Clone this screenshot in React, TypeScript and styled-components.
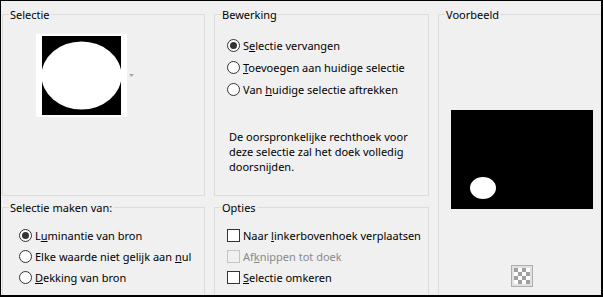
import React from 'react';
import styled, { createGlobalStyle } from 'styled-components';

const GlobalStyle = createGlobalStyle`
  body {
    margin: 0;
    background: #f0f0f0;
  }
`

const Dialog = styled.div`
  width: 603px;
  height: 297px;
  box-sizing: border-box;
  border: solid #000;
  border-width: 1px 2px 2px 1px;
  background: #f0f0f0;
  overflow: hidden;
  padding: 6px 0 0 1px;
  display: grid;
  grid-template-columns: 203px 215px 167px;
  grid-template-rows: 189px 100px;
  column-gap: 9px;
  row-gap: 4px;
  font-family: "Noto Sans", "Open Sans", sans-serif;
  font-size: 11px;
  color: #000;
`

const Group = styled.fieldset<{ $preview?: boolean }>`
  margin: 0;
  padding: 0;
  min-width: 0;
  border: 1px solid #dcdcdc;
  display: flex;
  flex-direction: column;
  ${p => p.$preview ? 'grid-column: 3; grid-row: 1 / 3;' : ''}
`

const Legend = styled.legend`
  margin-left: 6px;
  padding: 0 1px;
  line-height: 15px;
`

const ThumbRow = styled.div`
  display: flex;
  align-items: center;
  gap: 2px;
  margin: 12px 0 0 33px;
`

const ThumbFrame = styled.div`
  width: 91px;
  height: 83px;
  background: #fff;
  display: flex;
  align-items: center;
  justify-content: center;
`

const OptionList = styled.div<{ $top: number; $indent: number }>`
  display: flex;
  flex-direction: column;
  padding: ${p => p.$top}px 0 0 ${p => p.$indent}px;
`

const OptionRow = styled.label<{ $h: number; $disabled?: boolean }>`
  display: flex;
  align-items: center;
  gap: 3px;
  height: ${p => p.$h}px;
  white-space: nowrap;
  color: ${p => p.$disabled ? '#8a8a8a' : '#000'};
`

const Radio = styled.span<{ $on?: boolean }>`
  width: 13px;
  height: 13px;
  box-sizing: border-box;
  border: 1px solid #333;
  border-radius: 50%;
  background: #fff;
  flex: none;
  display: flex;
  align-items: center;
  justify-content: center;
  &::after {
    content: '';
    display: ${p => p.$on ? 'block' : 'none'};
    width: 7px;
    height: 7px;
    border-radius: 50%;
    background: #333;
  }
`

const Check = styled.span<{ $disabled?: boolean }>`
  width: 13px;
  height: 13px;
  box-sizing: border-box;
  border: 1px solid ${p => p.$disabled ? '#c4c4c4' : '#333'};
  background: ${p => p.$disabled ? '#f0f0f0' : '#fff'};
  flex: none;
`

const Key = styled.u`
  text-decoration: underline;
  text-underline-offset: 1px;
`

const Note = styled.p`
  margin: 29px 0 0 14px;
  line-height: 15px;
  white-space: nowrap;
`

const PreviewArea = styled.div`
  display: flex;
  flex-direction: column;
  align-items: center;
  padding-top: 88px;
`

const PreviewCanvas = styled.div`
  width: 142px;
  height: 99px;
  background: #000;
`

const BgButton = styled.div`
  margin-top: 56px;
  width: 22px;
  height: 22px;
  box-sizing: border-box;
  border: 1px solid #adadad;
  background: #e1e1e1;
  display: flex;
  align-items: center;
  justify-content: center;
`

const Checker = () => {
  const cells = [];
  for (let r = 0; r < 4; r++) {
    for (let c = 0; c < 4; c++) {
      cells.push(<rect key={`${r}-${c}`} x={c * 4} y={r * 4} width={4} height={4} fill={(r + c) % 2 === 0 ? '#a0a0a0' : '#fff'} />);
    }
  }
  return <svg width={16} height={16} viewBox="0 0 16 16">{cells}</svg>;
}

export default function App() {
  return (
    <>
      <GlobalStyle />
      <Dialog>
        <Group>
          <Legend>Selectie</Legend>
          <ThumbRow>
            <ThumbFrame>
              <svg width={79} height={79} viewBox="0 0 79 79">
                <rect width={79} height={79} fill="#000" />
                <ellipse cx={39.5} cy={39.5} rx={40} ry={34} fill="#fff" />
              </svg>
            </ThumbFrame>
            <svg width={5} height={3} viewBox="0 0 5 3">
              <polygon points="0,0 5,0 2.5,3" fill="#a8a8a8" />
            </svg>
          </ThumbRow>
        </Group>

        <Group>
          <Legend>Bewerking</Legend>
          <OptionList $top={12} $indent={12}>
            <OptionRow $h={22}><Radio $on /><span>S<Key>e</Key>lectie vervangen</span></OptionRow>
            <OptionRow $h={22}><Radio /><span><Key>T</Key>oevoegen aan huidige selectie</span></OptionRow>
            <OptionRow $h={22}><Radio /><span>Van <Key>h</Key>uidige selectie aftrekken</span></OptionRow>
          </OptionList>
          <Note>
            De oorspronkelijke rechthoek voor<br />
            deze selectie zal het doek volledig<br />
            doorsnijden.
          </Note>
        </Group>

        <Group $preview>
          <Legend>Voorbeeld</Legend>
          <PreviewArea>
            <PreviewCanvas>
              <svg width={142} height={99} viewBox="0 0 142 99">
                <ellipse cx={32} cy={78} rx={13} ry={11} fill="#fff" />
              </svg>
            </PreviewCanvas>
            <BgButton><Checker /></BgButton>
          </PreviewArea>
        </Group>

        <Group>
          <Legend>Selectie maken van:</Legend>
          <OptionList $top={10} $indent={16}>
            <OptionRow $h={21}><Radio $on /><span>L<Key>u</Key>minantie van bron</span></OptionRow>
            <OptionRow $h={21}><Radio /><span>Elke waarde niet gelijk aan <Key>n</Key>ul</span></OptionRow>
            <OptionRow $h={21}><Radio /><span><Key>D</Key>ekking van bron</span></OptionRow>
          </OptionList>
        </Group>

        <Group>
          <Legend>Opties</Legend>
          <OptionList $top={10} $indent={12}>
            <OptionRow $h={21}><Check /><span>Naar <Key>l</Key>inkerbovenhoek verplaatsen</span></OptionRow>
            <OptionRow $h={21} $disabled><Check $disabled /><span>Af<Key>k</Key>nippen tot doek</span></OptionRow>
            <OptionRow $h={21}><Check /><span><Key>S</Key>electie omkeren</span></OptionRow>
          </OptionList>
        </Group>
      </Dialog>
    </>
  );
}
